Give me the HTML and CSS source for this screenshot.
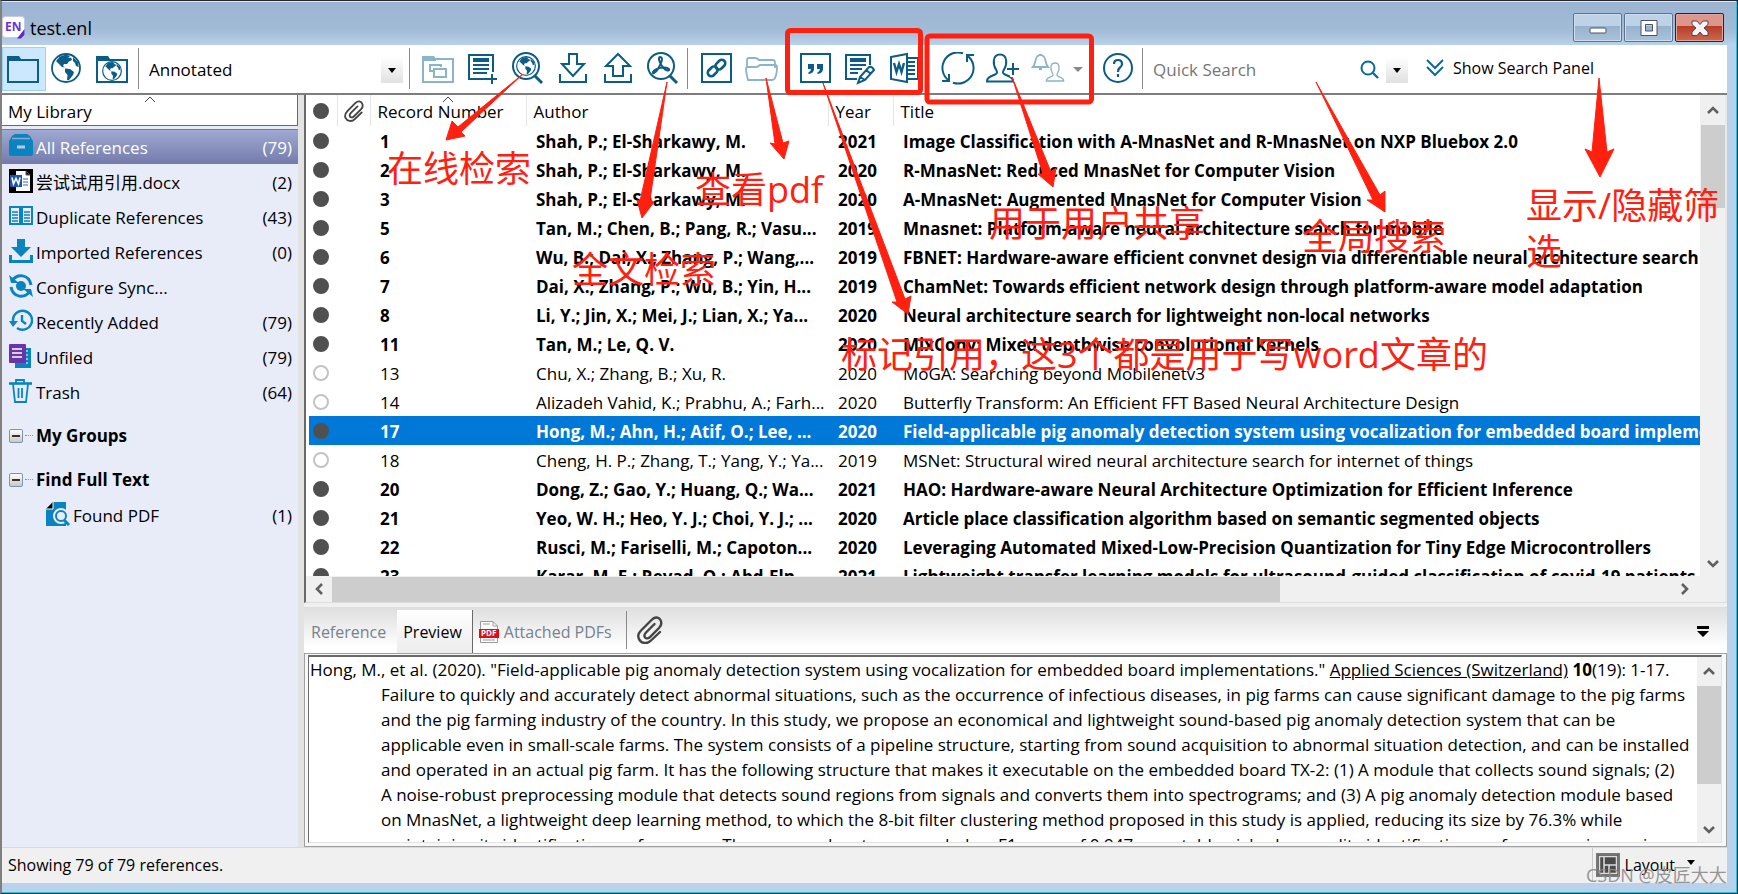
FILE: index.html
```html
<!DOCTYPE html>
<html lang="en">
<head>
<meta charset="utf-8">
<title>test.enl</title>
<link rel="stylesheet" href="styles.css">
</head>
<body>
<svg class="defs" aria-hidden="true">
  <symbol id="globe" viewBox="0 0 30 30">
    <circle cx="15" cy="15" r="14" fill="#fff" stroke="currentColor" stroke-width="1.8"/>
    <path fill="currentColor" d="M5 8 9 3.500 15 1.500 19 3 17 5 20 4.500 21 7 18 8.500 16 11 13 11 12 13 14 14.500 11 14 8 11ZM22 4 27 9 27.500 14 25 13 24 10 22 8ZM14 15.500 19 16 23 19 22 22 18 27 16 27 16.500 22 14 19Z"/>
  </symbol>
  <symbol id="person" viewBox="0 0 28 30">
    <path fill="none" stroke="currentColor" stroke-width="2" d="M1 28.500H27C27 25 25 24 19 21.500 16.500 20.500 16.500 19 18 16.500 21 12 22 1.500 14 1.500S7 12 10 16.500C11.500 19 11.500 20.500 9 21.500 3 24 1 25 1 28.500Z"/>
  </symbol>
  <symbol id="clip" viewBox="0 0 26 28">
    <path fill="none" stroke="currentColor" stroke-width="2.400" stroke-linecap="round" d="M23 16 14 24.500C10 28.500 4 27.500 2 23S2.500 16 5 13.500L15 3.500C18 .5 22 1 23.500 4S24 10 22 12L12.500 21.500C10.500 23 8 22.500 7.500 20.500S8 17.500 9 16.500L17.500 8"/>
  </symbol>
  <symbol id="up" viewBox="0 0 12 8"><path fill="none" stroke="currentColor" stroke-width="2.600" d="M1 7 6 2 11 7"/></symbol>
</svg>
<div class="window">
  <header class="titlebar">
    <svg class="app-icon" viewBox="0 0 23 23"><rect x=".5" y=".5" width="22" height="21" rx="3" fill="#fff" stroke="#cfc8dc"/><path fill="#5b2bc4" d="M22.500 13V19L19 22.500H15Z"/><text x="3" y="15" class="app-letters">EN</text></svg>
    <h1 class="title">test.enl</h1>
    <div class="caption">
      <button class="cap" aria-label="Minimize"><svg viewBox="0 0 24 20"><rect x="4" y="10" width="16" height="5" rx="1" fill="#fff" stroke="#4a5468"/></svg></button>
      <button class="cap" aria-label="Maximize"><svg viewBox="0 0 24 20"><path fill="#fff" fill-rule="evenodd" stroke="#4a5468" d="M4 2.500H20V17.500H4ZM8.500 6.500H15.500V13H8.500Z"/></svg></button>
      <button class="cap cap-close" aria-label="Close"><svg viewBox="0 0 24 20"><path fill="#f3f3f6" stroke="#57444f" d="M4 3H9L12 6.500 15 3H20V6.500L16 10 20 14V17.500H15L12 14 9 17.500H4V14L8 10 4 6.500Z"/></svg></button>
    </div>
  </header>

  <div class="client">
    <nav class="toolbar">
      <div class="group modes">
        <button class="tool on" aria-label="Local library"><svg viewBox="0 0 34 34"><path fill="none" stroke="currentColor" stroke-width="2" d="M1 8V30H31V8Z"/><path fill="currentColor" d="M0 4H12L14 7V9H0Z"/></svg></button>
        <button class="tool" aria-label="Online search"><svg viewBox="0 0 34 34"><use href="#globe" x="0" y="1" width="30" height="30"/></svg></button>
        <button class="tool" aria-label="Integrated library"><svg viewBox="0 0 34 34"><path fill="none" stroke="currentColor" stroke-width="2" d="M2 8V30H32V8Z"/><path fill="currentColor" d="M1 4H13L15 7V9H1Z"/><use href="#globe" x="7" y="9" width="20" height="20"/></svg></button>
      </div>
      <div class="style-pick">
        <select class="style-select" aria-label="Output style"><option>Annotated</option></select>
        <span class="drop"></span>
      </div>
      <div class="group">
        <button class="tool wide dim" aria-label="Copy to local library"><svg viewBox="0 0 34 34"><path fill="none" stroke="currentColor" stroke-width="2" d="M2 7V30H32V7ZM12 19H9V13H20V15"/><path fill="currentColor" d="M1 4H13L15 7V9H1Z"/><rect x="13" y="17" width="12" height="8" fill="#fff" stroke="currentColor" stroke-width="2"/></svg></button>
        <button class="tool wide" aria-label="New reference"><svg viewBox="0 0 34 34"><path fill="none" stroke="currentColor" stroke-width="2" d="M27 20V3H3V27H21M7 13H23M7 17H23M7 21H21M26 22V32M21 27H31"/><path fill="currentColor" d="M7 6H23V10H7Z"/></svg></button>
        <button class="tool wide" aria-label="Online search references"><svg viewBox="0 0 34 34"><circle cx="15" cy="14" r="13" fill="none" stroke="currentColor" stroke-width="2"/><use href="#globe" x="5" y="4" width="20" height="20"/><path stroke="currentColor" stroke-width="3" d="M24 24 31 31"/></svg></button>
        <button class="tool wide" aria-label="Import"><svg viewBox="0 0 34 34"><path fill="none" stroke="currentColor" stroke-width="2" d="M13 2H21V12H28L17 24 6 12H13ZM4 22V30H30V22"/></svg></button>
        <button class="tool wide" aria-label="Export"><svg viewBox="0 0 34 34"><path fill="none" stroke="currentColor" stroke-width="2" d="M12 24V14H5L17 2 29 14H22V24ZM4 22V30H30V22"/></svg></button>
        <button class="tool wide" aria-label="Find full text"><svg viewBox="0 0 34 34"><circle cx="15" cy="14" r="13" fill="none" stroke="currentColor" stroke-width="2"/><path fill="none" stroke="currentColor" stroke-width="2" d="M14 5C18 5 15 12 12 17 9 22 6 22 7 20 9 16 20 14 23 17 24 19 20 20 16 14 13 10 12 5 14 5Z"/><path stroke="currentColor" stroke-width="3" d="M24 24 31 31"/></svg></button>
      </div>
      <div class="group">
        <button class="tool wide" aria-label="Open link"><svg viewBox="0 0 34 34"><rect x="3" y="2" width="29" height="28" fill="none" stroke="currentColor" stroke-width="2"/><g fill="none" stroke="currentColor" stroke-width="2.600"><rect x="-5" y="-3.500" width="11" height="7" rx="3.500" transform="translate(21 13) rotate(-45)"/><rect x="-6" y="-3.500" width="11" height="7" rx="3.500" transform="translate(14 19) rotate(-45)"/></g></svg></button>
        <button class="tool wide dim" aria-label="Open file"><svg viewBox="0 0 34 34"><path fill="none" stroke="currentColor" stroke-width="1.800" d="M3 16V8Q3 6 5 6H11Q13 6 15 8H29Q31 8 31 11V16M4 28Q2 20 2 17 2 15 4 15H12Q14 15 16 13H31Q33 13 33 15 33 22 31 26 30 28 28 28Z"/></svg></button>
      </div>
      <div class="group plain">
        <button class="tool wide" aria-label="Insert citation"><svg viewBox="0 0 34 34"><rect x="2" y="2" width="29" height="28" fill="none" stroke="currentColor" stroke-width="2"/><path fill="currentColor" d="M9 12H15V17Q15 21 10 22L9 21Q12 19 12 17H9ZM18 12H24V17Q24 21 19 22L18 21Q21 19 21 17H18Z"/></svg></button>
        <button class="tool wide" aria-label="Format bibliography"><svg viewBox="0 0 34 34"><path fill="none" stroke="currentColor" stroke-width="2" d="M26 13V3H2V27H13M6 13H22M6 17H18M6 21H14M16 25 25 15Q28 14 30 18L21 28 14 31ZM22 18 27 22M16 25 21 28"/><path fill="currentColor" d="M6 6H22V10H6Z"/></svg></button>
        <button class="tool wide" aria-label="Go to word processor"><svg viewBox="0 0 34 34"><path fill="none" stroke="currentColor" stroke-width="2" d="M2 5 18 2V30L2 27ZM18 6H29V27H18M19 10H26M19 14H26M19 18H26M19 22H26"/><path fill="none" stroke="currentColor" stroke-width="2.400" d="M5 11 7.500 20 10 12 12.500 20 15 11"/></svg></button>
      </div>
      <div class="group plain sharing">
        <button class="tool wide" aria-label="Sync"><svg viewBox="0 0 34 34"><path fill="none" stroke="currentColor" stroke-width="2" d="M7.700 28.400A15.500 15.500 0 0 1 22 1.300M26.300 3.600A15.500 15.500 0 0 1 12 30.700M33 3H26V10M1 29H8V22"/></svg></button>
        <button class="tool wide" aria-label="Share library"><svg viewBox="0 0 34 34"><use href="#person" x="0" y="1" width="28" height="30"/><path stroke="#fff" stroke-width="6" d="M27 10V25"/><path stroke="currentColor" stroke-width="2" d="M27 11V23M21 17H33"/></svg></button>
        <button class="tool wide dim" aria-label="Activity"><svg viewBox="0 0 34 34"><path fill="none" stroke="currentColor" stroke-width="1.800" d="M2 15H17C14 12 15 5 12 4 10 2 8 3 7 4 4 5 5 12 2 15ZM8 17H11M9 2V4"/><use href="#person" x="14" y="10" width="20" height="20"/></svg></button>
        <span class="mini-caret"></span>
        <button class="tool wide help" aria-label="Help"><svg viewBox="0 0 34 34"><circle cx="17" cy="16" r="14" fill="none" stroke="currentColor" stroke-width="2"/><path fill="none" stroke="currentColor" stroke-width="2.200" d="M13 12Q13 8 17 8T21 12Q21 14 19 15.500 17 17 17 20M17 22V25"/></svg></button>
      </div>
      <div class="search">
        <input class="search-box" type="text" placeholder="Quick Search" aria-label="Quick Search">
        <svg class="lens" viewBox="0 0 20 20"><circle cx="8" cy="8" r="6.500" fill="none" stroke="currentColor" stroke-width="2"/><path stroke="currentColor" stroke-width="2.400" d="M13 13 18 18"/></svg>
        <span class="drop"></span>
      </div>
      <button class="panel-toggle"><svg viewBox="0 0 18 18"><path fill="none" stroke="currentColor" stroke-width="2" d="M1 1 9 9 17 1M1 8 9 16 17 8"/></svg>Show Search Panel</button>
    </nav>

    <main class="body">
      <aside class="sidebar">
        <div class="side-head">My Library<svg class="sort" viewBox="0 0 12 7"><path fill="none" stroke="currentColor" d="M1 6 6 1 11 6"/></svg></div>
        <ul class="tree">
          <li class="node current"><svg class="ni" viewBox="0 0 24 24"><path fill="#0a84c1" d="M3 2 6 0H18L21 2 24 7V20Q24 22 22 22H2Q0 22 0 20V7Z"/><path stroke="#8fa8d4" stroke-width="1.500" d="M3 4.500H21"/><path stroke="#b9c6e6" stroke-width="3" d="M8 13H16"/></svg><span>All References</span><b>(79)</b></li>
          <li class="node"><svg class="ni" viewBox="0 0 24 24"><path fill="#000" d="M0 0H24V24H0Z"/><path fill="#fff" d="M7 2H17L21 6V22H7Z"/><path stroke="#555" d="M17 2V6H21"/><path stroke="#2a66b8" d="M14 10H19M14 13H19M14 16H19"/><path fill="#1c55ad" d="M1 6H13V18H1Z"/><path fill="none" stroke="#fff" stroke-width="1.600" d="M3 8.500 4.500 15 7 9.500 9.500 15 11 8.500"/></svg><span>尝试试用引用.docx</span><b>(2)</b></li>
          <li class="node"><svg class="ni" viewBox="0 0 24 24"><path fill="none" stroke="#0a84c1" stroke-width="2" d="M1 3H11V20H1ZM13 3H23V20H13Z"/><path stroke="#0a84c1" stroke-width="1.500" d="M0 3H24M3 8H9M3 11H9M3 14H9M3 17H9M15 8H21M15 11H21M15 14H21M15 17H21"/></svg><span>Duplicate References</span><b>(43)</b></li>
          <li class="node"><svg class="ni" viewBox="0 0 24 24"><path fill="#0a84c1" d="M8 0H16V8H22L12 18 2 8H8Z"/><path fill="none" stroke="#0a84c1" stroke-width="3" d="M1.500 16V22.500H22.500V16"/></svg><span>Imported References</span><b>(0)</b></li>
          <li class="node"><svg class="ni" viewBox="0 0 24 24"><circle cx="12" cy="12" r="5" fill="#0a84c1"/><path fill="none" stroke="#0a84c1" stroke-width="3" d="M3 7C8-1 20 0 22 11M21 17C16 25 4 24 2 13"/><path fill="#0a84c1" d="M0 1 2 9H10ZM24 23 22 15H14Z"/></svg><span>Configure Sync...</span></li>
          <li class="node"><svg class="ni" viewBox="0 0 24 24"><path fill="none" stroke="#0a84c1" stroke-width="2.400" d="M4 14V11A9.500 9.500 0 1 1 8 19M13 6V12L17 15"/><path fill="#0a84c1" d="M0 12H9L4 18Z"/></svg><span>Recently Added</span><b>(79)</b></li>
          <li class="node"><svg class="ni" viewBox="0 0 24 24"><path fill="#0a84c1" d="M6 4H22V24H6Z"/><path stroke="#fff" stroke-dasharray="2 2" d="M18 6V22"/><rect width="17" height="19" rx="1" fill="#6a35a8"/><path stroke="#fff" stroke-width="1.600" d="M3 5H13M3 9H13M3 13H13"/></svg><span>Unfiled</span><b>(79)</b></li>
          <li class="node"><svg class="ni" viewBox="0 0 24 24"><path fill="none" stroke="#0a84c1" stroke-width="1.800" d="M7 4V1H15V4M4 5 6 23H17L19 5M9.500 9V19M13 9V19"/><path stroke="#0a84c1" stroke-width="2.600" d="M0 4.500H23"/></svg><span>Trash</span><b>(64)</b></li>
          <li class="node folder"><i class="fold"></i><span>My Groups</span></li>
          <li class="node folder"><i class="fold"></i><span>Find Full Text</span></li>
          <li class="node child"><svg class="ni" viewBox="0 0 24 24"><path fill="#0a84c1" d="M7 0H20V24H0V7Z"/><path stroke="#fff" d="M7 0V7H0"/><circle cx="15" cy="14" r="6" fill="#e8ecf9" stroke="#e8ecf9" stroke-width="4"/><circle cx="15" cy="14" r="5" fill="none" stroke="#0a84c1" stroke-width="2"/><path stroke="#0a84c1" stroke-width="3" d="M18 18 23 23"/></svg><span>Found PDF</span><b>(1)</b></li>
        </ul>
      </aside>

      <section class="content">
        <div class="list">
          <div class="list-view">
            <table class="refs">
              <colgroup><col class="c-dot"><col class="c-clip"><col class="c-num"><col class="c-author"><col class="c-year"><col></colgroup>
              <thead><tr>
                <th><i class="dot"></i></th>
                <th><svg class="clip-sm"><use href="#clip"/></svg></th>
                <th>Record Number<svg class="sort" viewBox="0 0 12 7"><path fill="none" stroke="currentColor" d="M1 6 6 1 11 6"/></svg></th>
                <th>Author</th><th>Year</th><th>Title</th>
              </tr></thead>
              <tbody>
                <tr class="unread"><td><i class="dot"></i></td><td></td><td>1</td><td>Shah, P.; El-Sharkawy, M.</td><td>2021</td><td>Image Classification with A-MnasNet and R-MnasNet on NXP Bluebox 2.0</td></tr>
                <tr class="unread"><td><i class="dot"></i></td><td></td><td>2</td><td>Shah, P.; El-Sharkawy, M.</td><td>2020</td><td>R-MnasNet: Reduced MnasNet for Computer Vision</td></tr>
                <tr class="unread"><td><i class="dot"></i></td><td></td><td>3</td><td>Shah, P.; El-Sharkawy, M.</td><td>2020</td><td>A-MnasNet: Augmented MnasNet for Computer Vision</td></tr>
                <tr class="unread"><td><i class="dot"></i></td><td></td><td>5</td><td>Tan, M.; Chen, B.; Pang, R.; Vasu...</td><td>2019</td><td>Mnasnet: Platform-aware neural architecture search for mobile</td></tr>
                <tr class="unread"><td><i class="dot"></i></td><td></td><td>6</td><td>Wu, B.; Dai, X.; Zhang, P.; Wang,...</td><td>2019</td><td>FBNET: Hardware-aware efficient convnet design via differentiable neural architecture search</td></tr>
                <tr class="unread"><td><i class="dot"></i></td><td></td><td>7</td><td>Dai, X.; Zhang, P.; Wu, B.; Yin, H...</td><td>2019</td><td>ChamNet: Towards efficient network design through platform-aware model adaptation</td></tr>
                <tr class="unread"><td><i class="dot"></i></td><td></td><td>8</td><td>Li, Y.; Jin, X.; Mei, J.; Lian, X.; Ya...</td><td>2020</td><td>Neural architecture search for lightweight non-local networks</td></tr>
                <tr class="unread"><td><i class="dot"></i></td><td></td><td>11</td><td>Tan, M.; Le, Q. V.</td><td>2020</td><td>MixConv: Mixed depthwise convolutional kernels</td></tr>
                <tr><td><i class="dot"></i></td><td></td><td>13</td><td>Chu, X.; Zhang, B.; Xu, R.</td><td>2020</td><td>MoGA: Searching beyond Mobilenetv3</td></tr>
                <tr><td><i class="dot"></i></td><td></td><td>14</td><td>Alizadeh Vahid, K.; Prabhu, A.; Farh...</td><td>2020</td><td>Butterfly Transform: An Efficient FFT Based Neural Architecture Design</td></tr>
                <tr class="unread selected"><td><i class="dot"></i></td><td></td><td>17</td><td>Hong, M.; Ahn, H.; Atif, O.; Lee, ...</td><td>2020</td><td>Field-applicable pig anomaly detection system using vocalization for embedded board implementations</td></tr>
                <tr><td><i class="dot"></i></td><td></td><td>18</td><td>Cheng, H. P.; Zhang, T.; Yang, Y.; Ya...</td><td>2019</td><td>MSNet: Structural wired neural architecture search for internet of things</td></tr>
                <tr class="unread"><td><i class="dot"></i></td><td></td><td>20</td><td>Dong, Z.; Gao, Y.; Huang, Q.; Wa...</td><td>2021</td><td>HAO: Hardware-aware Neural Architecture Optimization for Efficient Inference</td></tr>
                <tr class="unread"><td><i class="dot"></i></td><td></td><td>21</td><td>Yeo, W. H.; Heo, Y. J.; Choi, Y. J.; ...</td><td>2020</td><td>Article place classification algorithm based on semantic segmented objects</td></tr>
                <tr class="unread"><td><i class="dot"></i></td><td></td><td>22</td><td>Rusci, M.; Fariselli, M.; Capoton...</td><td>2020</td><td>Leveraging Automated Mixed-Low-Precision Quantization for Tiny Edge Microcontrollers</td></tr>
                <tr class="unread"><td><i class="dot"></i></td><td></td><td>23</td><td>Karar, M. E.; Reyad, O.; Abd-Eln...</td><td>2021</td><td>Lightweight transfer learning models for ultrasound-guided classification of covid-19 patients</td></tr>
              </tbody>
            </table>
          </div>
          <div class="vbar"><svg class="arr"><use href="#up"/></svg><i class="thumb list-thumb"></i><svg class="arr down"><use href="#up"/></svg></div>
          <div class="hbar"><svg class="arr left"><use href="#up"/></svg><i class="hthumb"></i><svg class="arr right"><use href="#up"/></svg></div>
          <div class="corner"></div>
        </div>

        <div class="tabs">
          <button class="tab">Reference</button>
          <button class="tab active">Preview</button>
          <button class="tab pdfs"><svg class="pdf-icon" viewBox="0 0 20 24"><path fill="#fff" stroke="#9a9a9a" d="M1.500 1.500H14L18.500 6V22.500H1.500Z"/><path stroke="#9a9a9a" fill="none" d="M14 1.500V6H18.500M4 4H11M4 20H16"/><path fill="#e30b17" d="M0 9H20V18H0Z"/><text x="2" y="16" class="pdf-letters">PDF</text></svg>Attached PDFs</button>
          <button class="clip-btn" aria-label="Attach file"><svg class="clip-lg"><use href="#clip"/></svg></button>
          <svg class="menu-caret" viewBox="0 0 12 12"><path d="M0 0H12V3H0ZM0 5H12L6 11Z"/></svg>
        </div>

        <div class="preview">
          <div class="preview-box">
            <p class="cite"><span class="first">Hong, M., et al. (2020). "Field-applicable pig anomaly detection system using vocalization for embedded board implementations." <u>Applied Sciences (Switzerland)</u> <strong>10</strong>(19): 1-17.</span>
              <span>Failure to quickly and accurately detect abnormal situations, such as the occurrence of infectious diseases, in pig farms can cause significant damage to the pig farms</span>
              <span>and the pig farming industry of the country. In this study, we propose an economical and lightweight sound-based pig anomaly detection system that can be</span>
              <span>applicable even in small-scale farms. The system consists of a pipeline structure, starting from sound acquisition to abnormal situation detection, and can be installed</span>
              <span>and operated in an actual pig farm. It has the following structure that makes it executable on the embedded board TX-2: (1) A module that collects sound signals; (2)</span>
              <span>A noise-robust preprocessing module that detects sound regions from signals and converts them into spectrograms; and (3) A pig anomaly detection module based</span>
              <span>on MnasNet, a lightweight deep learning method, to which the 8-bit filter clustering method proposed in this study is applied, reducing its size by 76.3% while</span>
              <span>maintaining its identification performance. The proposed system recorded an F1-score of 0.947 as a stable pig's abnormality identification performance, increasing</span></p>
            <div class="vbar"><svg class="arr"><use href="#up"/></svg><i class="thumb preview-thumb"></i><svg class="arr down"><use href="#up"/></svg></div>
          </div>
        </div>
      </section>
    </main>

    <footer class="status">
      <span>Showing 79 of 79 references.</span>
      <button class="layout-btn"><svg viewBox="0 0 24 24"><path fill="#4a4a4a" stroke="#777" stroke-width="2" d="M1 1H23V23H1Z"/><path fill="none" stroke="#ddd" stroke-width="1.500" d="M3.500 3.500H20.500V20.500H3.500ZM8 4V20M8 12H21M13 12V20"/></svg>Layout<i class="caret"></i></button>
    </footer>
  </div>
</div>

<div class="notes">
  <svg class="ink" viewBox="0 0 1738 894">
    <rect x="787.5" y="30.5" width="133" height="62" rx="3"/>
    <rect x="927" y="36" width="164.500" height="66" rx="3"/>
    <path class="arrow" d="M523 74 458 127 452 121 446 140 465 136 461 132ZM667 82 640 201 637 200 642 218 654 202 650 200ZM766 78 775 144 770 143 784 159 789 141 783 143ZM823 83 897 302 892 302 908 314 911 296 905 299ZM1012 77 1043 174 1038 174 1053 187 1056 168 1051 172ZM1316 82 1373 200 1367 200 1385 212 1385 191 1380 195ZM1599 78 1592 152 1585 149 1600 177 1614 149 1607 152Z"/>
  </svg>
  <span class="note n-online">在线检索</span>
  <span class="note n-pdf">查看pdf</span>
  <span class="note n-full">全文检索</span>
  <span class="note n-share">用于用户共享</span>
  <span class="note n-global">全局搜索</span>
  <span class="note n-filter">显示/隐藏筛选</span>
  <span class="note n-cite">标记引用，这3个都是用于写word文章的</span>
  <span class="watermark">CSDN @皮匠大大</span>
</div>
</body>
</html>
```
FILE: styles.css
```css
* { box-sizing: border-box; }
html, body { height: 100%; margin: 0; }
body {
  font: 17px/24px "Open Sans", "Noto Sans", "Noto Sans CJK SC", sans-serif;
  color: #000;
  overflow: hidden;
  position: relative;
}
button, input, select { font: inherit; color: inherit; border: 0; background: none; padding: 0; margin: 0; }
svg { display: block; flex: none; }
.defs { width: 0; height: 0; position: absolute; }

.window {
  height: 100vh;
  display: flex;
  flex-direction: column;
  padding: 0 10px 10px 0;
  border: 1px solid #26262e;
  border-left: 2px solid #808080;
  box-shadow: inset -1px -1px #22c4dc;
  background: #b9d1ea;
}

/* Title bar */
.titlebar {
  height: 44px;
  flex: none;
  display: flex;
  align-items: flex-start;
  background: linear-gradient(#9ab4d2, #a2bbd6 65%, #b9d1ea);
  margin-right: -9px;
  padding-right: 9px;
  border-top: 1px solid #dfe9f4;
}
.app-icon { width: 23px; height: 23px; margin-top: 14px; }
.app-letters { font: bold 12px "Open Sans", sans-serif; fill: #6a35e0; }
.title { margin: 14px auto 0 5px; font-size: 18px; font-weight: 400; line-height: 24px; }
.caption { display: flex; gap: 2px; margin-top: 11px; padding-right: 3px; }
.cap {
  width: 49px;
  height: 29px;
  display: grid;
  place-items: center;
  border: 1px solid #5d7491;
  border-radius: 2px;
  box-shadow: inset 0 0 0 1px #cfdeee;
  background: linear-gradient(#bdd1e7 45%, #98b1cd 45%, #a9c2dc);
}
.cap svg { width: 24px; height: 20px; }
.cap-close {
  border-color: #4d1420;
  box-shadow: inset 0 0 0 1px #e0a59c;
  background: linear-gradient(#dd968c 45%, #b73c27 45%, #cc6a4e);
}

.client { flex: 1; min-height: 0; display: flex; flex-direction: column; background: #f0f0f0; }

/* Toolbar */
.toolbar {
  height: 50px;
  flex: none;
  display: flex;
  align-items: flex-start;
  background: #fff;
  border-bottom: 2px solid #7d7d7d;
}
.group { display: flex; align-items: center; height: 48px; color: #0b5c86; padding: 0 2px 0 6px; }
.group.modes { padding: 0 4px 0 0; }
.group.plain { padding: 0 0 0 8px; }
.group.sharing { padding: 0 2px 0 7px; }
.tool { width: 44px; height: 44px; display: grid; place-items: center; }
.tool.wide { width: 45px; }
.tool svg { width: 34px; height: 34px; }
.tool.on { background: #cce8ff; border: 1px solid #99d1ff; }
.dim { color: #8ab4c8; }
.mini-caret { width: 10px; border: 5px solid transparent; border-top-color: #8a8a8a; border-bottom: 0; margin: 0 12px 0 3px; }
.style-pick, .search, .group + .group:not(.plain), .style-pick + .group {
  background: linear-gradient(#8a8a8a, #8a8a8a) 0 3px / 1px 41px no-repeat;
}
.style-pick { width: 271px; height: 48px; display: flex; align-items: center; padding: 2px 6px 0 11px; }
.style-select { appearance: none; flex: 1; min-width: 0; height: 28px; }
.drop {
  width: 22px;
  height: 26px;
  display: grid;
  place-items: center;
  background: linear-gradient(#fff, #e0e0e0);
}
.drop::after, .caret { content: ""; border: 4px solid transparent; border-top: 5px solid #000; border-bottom: 0; }
.search { width: 266px; height: 48px; display: flex; align-items: center; padding: 2px 0 0 11px; }
.search-box { flex: 1; min-width: 0; outline: 0; }
.search-box::placeholder { color: #767676; opacity: 1; }
.lens { width: 20px; height: 20px; margin-right: 6px; color: #0b6a98; }
.panel-toggle { display: flex; align-items: center; gap: 9px; height: 46px; margin-left: 18px; white-space: nowrap; font-size: 16px; }
.panel-toggle svg { width: 18px; height: 18px; color: #0b6a98; }

/* Library groups */
.body { flex: 1; min-height: 0; display: grid; grid-template-columns: 302px minmax(0, 1fr); }
.sidebar { background: #e8ecf9; border-right: 6px solid #e3e3e3; min-height: 0; overflow: hidden; }
.side-head {
  height: 31px;
  border: 1px solid #696969;
  border-top: 0;
  border-left: 0;
  background: #fff;
  padding: 5px 6px 0;
  position: relative;
}
.sort { position: absolute; left: calc(50% - 6px); top: 1px; width: 12px; height: 7px; color: #444; }
.tree { list-style: none; margin: 3px 0 0; padding: 0; }
.node { height: 35px; display: flex; align-items: center; gap: 3px; padding: 2px 6px 0 7px; white-space: nowrap; }
.node b { font-weight: 400; margin-left: auto; }
.ni { width: 24px; height: 24px; margin-top: -4px; }
.current { color: #fff; background: linear-gradient(#a0a9d1, #737bad); border-top: 1px solid #707aa8; }
.folder { height: 44px; font-weight: 700; padding-top: 10px; gap: 13px; }
.child { padding-left: 44px; }
.fold {
  width: 14px;
  height: 14px;
  border: 1px solid #7896b4;
  border-radius: 2px;
  background: linear-gradient(#333, #333) center / 8px 2px no-repeat, linear-gradient(#fff, #ccc9c0);
  position: relative;
}
.fold::after { content: ""; position: absolute; left: 15px; top: 5px; width: 8px; border-top: 1px dotted #7896b4; }

/* Reference list */
.content { display: flex; flex-direction: column; min-width: 0; min-height: 0; }
.list {
  flex: 507 1 0;
  min-height: 0;
  display: grid;
  grid-template: minmax(0, 1fr) 26px / minmax(0, 1fr) 25px;
  border-left: 2px solid #696969;
  border-right: 2px solid #e8e8e8;
  border-bottom: 1px solid #dcdcdc;
  background: #fff;
}
.list-view { overflow: hidden; padding-left: 3px; }
.refs { width: 100%; table-layout: fixed; border-collapse: collapse; }
.c-dot { width: 28px; }
.c-clip { width: 33px; }
.c-num { width: 156px; }
.c-author { width: 302px; }
.c-year { width: 65px; }
.refs th, .refs td { padding: 0 0 0 10px; text-align: left; white-space: nowrap; overflow: hidden; }
.refs th { height: 31px; padding-left: 7px; padding-top: 2px; font-weight: 400; position: relative; border-right: 1px solid #e5e5e5; }
.refs th:last-child { border: 0; }
.refs td { height: 29px; line-height: 27px; padding-top: 2px; }
.refs th:first-child, .refs td:first-child { padding: 0 0 0 4px; }
.refs th:nth-child(2) { padding: 0 0 0 6px; }
.unread { font-weight: 700; }
.selected { color: #fff; background: #0078d7; }
.dot { display: block; width: 16px; height: 16px; border-radius: 50%; border: 2px solid #c3c3c3; background: #fff; }
.unread .dot, th .dot { border-color: #505050; background: #505050; }
.clip-sm { width: 20px; height: 22px; color: #444; }

/* Scroll bars */
.vbar { background: #f0f0f0; display: flex; flex-direction: column; align-items: center; color: #606060; }
.hbar { background: #f0f0f0; display: flex; align-items: center; color: #606060; }
.corner { background: #f0f0f0; }
.arr { width: 12px; height: 8px; margin: 11px 6px; }
.arr.down { transform: rotate(180deg); margin: auto 6px 8px; }
.arr.left { transform: rotate(-90deg); margin: 0 7px; }
.arr.right { transform: rotate(90deg); margin: 0 9px 0 auto; }
.thumb { width: 24px; background: #cdcdcd; }
.list-thumb { height: 83px; }
.preview-thumb { height: 98px; }
.hthumb { height: 25px; width: 68%; background: #cdcdcd; }

/* Tabs */
.tabs { height: 46px; margin-top: 4px; flex: none; display: flex; align-items: flex-end; background: linear-gradient(#dedede, #fff 88%); font-size: 16px; }
.tab { height: 43px; padding: 0 11px 0 7px; color: #76828e; white-space: nowrap; display: flex; align-items: center; gap: 5px; }
.tab.active { color: #000; background: linear-gradient(#fff, #ececec); border-right: 1px solid #696969; padding: 0 10px 0 6px; }
.tab.pdfs { padding: 0 14px 0 6px; }
.pdf-icon { width: 20px; height: 24px; }
.pdf-letters { font: bold 8px "Open Sans", sans-serif; fill: #fff; }
.clip-btn { height: 38px; padding-left: 10px; border-left: 1px solid #8a8a8a; align-self: center; }
.clip-lg { width: 26px; height: 28px; color: #444; }
.menu-caret { width: 12px; height: 12px; margin: auto 18px 15px auto; }

/* Preview */
.preview { flex: 188 1 0; min-height: 0; padding: 1px 4px 3px 3px; border: 1px solid #a0a0a0; background: #f8f8f8; }
.preview-box { height: 100%; display: grid; grid-template-columns: minmax(0, 1fr) 24px; border: 1px solid #e3e3e3; border-top: 2px solid #696969; border-left-color: #696969; background: #fff; overflow: hidden; }
.cite { margin: 0; padding: 0 0 0 72px; line-height: 25px; white-space: nowrap; overflow: hidden; min-height: 0; }
.cite > span { display: block; }
.cite .first { margin-left: -71px; }
.preview .arr { margin-top: 10px; }
.preview .arr.down { margin-top: auto; }

/* Status bar */
.status { height: 36px; flex: none; display: flex; align-items: center; padding: 0 32px 2px 6px; border-top: 1px solid #dadada; font-size: 16px; }
.layout-btn { margin-left: auto; height: 34px; display: flex; align-items: center; gap: 5px; padding-left: 3px; border-left: 1px solid #c8c8c8; }
.layout-btn svg { width: 24px; height: 24px; }
.layout-btn .caret { margin: 0 0 4px 7px; }

/* Annotations drawn over the window */
.notes { position: absolute; inset: 0; pointer-events: none; }
.ink { position: absolute; left: 0; top: 0; width: 1738px; height: 894px; fill: none; stroke: #ff2010; stroke-width: 5; }
.arrow { fill: #ff2010; stroke: #ff2010; stroke-width: 1; }
.note { position: absolute; color: #ff2010; font-size: 36px; line-height: 46px; white-space: nowrap; }
.n-online { left: 387px; top: 146px; }
.n-pdf { left: 695px; top: 167px; }
.n-full { left: 572px; top: 247px; }
.n-share { left: 989px; top: 201px; }
.n-global { left: 1302px; top: 214px; }
.n-filter { left: 1526px; top: 183px; width: 200px; white-space: normal; }
.n-cite { left: 841px; top: 332px; }
.watermark { position: absolute; left: 1586px; top: 863px; color: #8c8c8c; font-size: 18px; opacity: .9; white-space: nowrap; }
```
